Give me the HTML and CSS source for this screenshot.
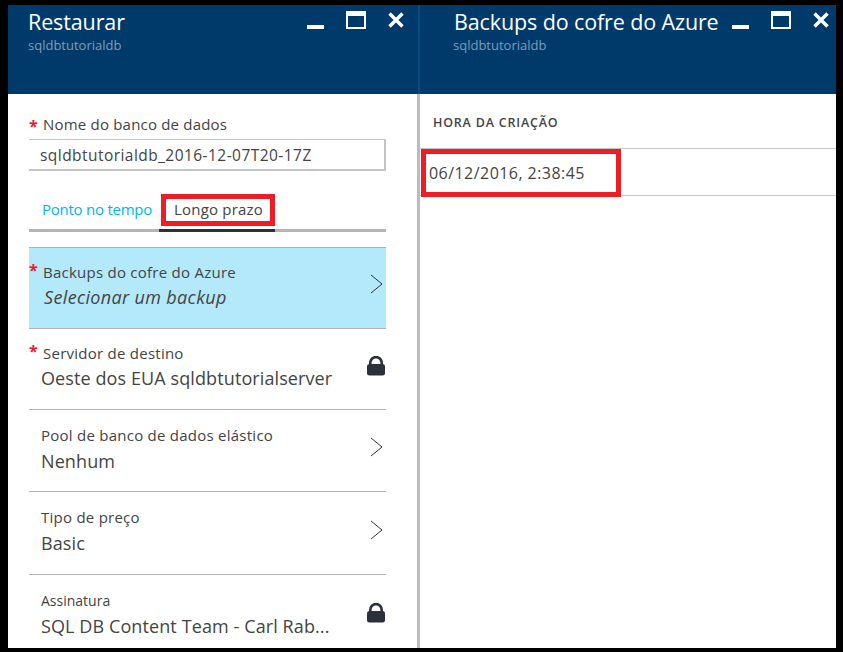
FILE: index.html
```html
<!DOCTYPE html>
<html lang="en">
<head>
    <meta charset="UTF-8">
    <meta name="viewport" content="width=device-width, initial-scale=1.0">
    <title>Restaurar</title>
    <link rel="stylesheet" href="styles.css">
</head>
<body>
    <svg class="icon-defs" width="0" height="0">
        <symbol id="minimize" viewBox="0 0 17 4"><rect x="0" y="0" width="17" height="4" fill="#fff"/></symbol>
        <symbol id="maximize" viewBox="0 0 20 18"><path d="M0 0H20V18H0ZM2 5V16H18V5Z" fill="#fff" fill-rule="evenodd"/></symbol>
        <symbol id="close" viewBox="0 0 16 16"><path d="M1.5 1.5L14.5 14.5M14.5 1.5L1.5 14.5" stroke="#fff" stroke-width="3.4" fill="none"/></symbol>
        <symbol id="chevron" viewBox="0 0 13 20"><path d="M1 1L12 10L1 19" stroke="#30353f" stroke-width="1" fill="none"/></symbol>
        <symbol id="lock" viewBox="0 0 18 20"><path d="M3.3 9V6.8a5.7 5.7 0 0 1 11.4 0V9" stroke="#2b303b" stroke-width="2.6" fill="none"/><rect x="0" y="8" width="18" height="11.5" rx="2.5" fill="#2b303b"/></symbol>
    </svg>

    <div class="portal">
        <section class="blade blade-left">
            <header class="blade-header">
                <div class="blade-titles">
                    <h1>Restaurar</h1>
                    <p>sqldbtutorialdb</p>
                </div>
                <div class="blade-actions">
                    <svg class="ic-min"><use href="#minimize"/></svg>
                    <svg class="ic-max"><use href="#maximize"/></svg>
                    <svg class="ic-close"><use href="#close"/></svg>
                </div>
            </header>
            <div class="blade-body">
                <label class="field-label" for="dbName"><span class="req">*</span>Nome do banco de dados</label>
                <input class="field-input" id="dbName" type="text" value="sqldbtutorialdb_2016-12-07T20-17Z">

                <div class="tabs">
                    <a class="tab">Ponto no tempo</a>
                    <a class="tab tab-active"><span class="mark-tab">Longo prazo</span></a>
                </div>

                <div class="row row-selected">
                    <div class="row-text">
                        <span class="row-label row-label-req"><span class="req req-row">*</span>Backups do cofre do Azure</span>
                        <span class="row-value row-value-em">Selecionar um backup</span>
                    </div>
                    <svg class="ic-chevron"><use href="#chevron"/></svg>
                </div>
                <div class="row row-short">
                    <div class="row-text">
                        <span class="row-label row-label-req"><span class="req req-row">*</span>Servidor de destino</span>
                        <span class="row-value">Oeste dos EUA sqldbtutorialserver</span>
                    </div>
                    <svg class="ic-lock"><use href="#lock"/></svg>
                </div>
                <div class="row">
                    <div class="row-text row-text-plain">
                        <span class="row-label">Pool de banco de dados elástico</span>
                        <span class="row-value">Nenhum</span>
                    </div>
                    <svg class="ic-chevron"><use href="#chevron"/></svg>
                </div>
                <div class="row row-tall">
                    <div class="row-text row-text-plain">
                        <span class="row-label">Tipo de preço</span>
                        <span class="row-value">Basic</span>
                    </div>
                    <svg class="ic-chevron"><use href="#chevron"/></svg>
                </div>
                <div class="row">
                    <div class="row-text row-text-last">
                        <span class="row-label row-label-small">Assinatura</span>
                        <span class="row-value">SQL DB Content Team - Carl Rab...</span>
                    </div>
                    <svg class="ic-lock"><use href="#lock"/></svg>
                </div>
            </div>
        </section>

        <section class="blade blade-right">
            <header class="blade-header">
                <div class="blade-titles">
                    <h1>Backups do cofre do Azure</h1>
                    <p>sqldbtutorialdb</p>
                </div>
                <div class="blade-actions">
                    <svg class="ic-min"><use href="#minimize"/></svg>
                    <svg class="ic-max"><use href="#maximize"/></svg>
                    <svg class="ic-close"><use href="#close"/></svg>
                </div>
            </header>
            <div class="blade-body-right">
                <div class="grid-head">HORA DA CRIAÇÃO</div>
                <div class="grid-row">
                    <span class="mark-cell">06/12/2016, 2:38:45</span>
                </div>
            </div>
        </section>
    </div>
</body>
</html>
```

FILE: styles.css
```css
html, body {
    margin: 0;
    padding: 0;
    height: 100%;
    background-color: #000000;
    overflow: hidden;
}
body {
    font-family: "Open Sans", "Noto Sans", Arial, sans-serif;
    color: #444444;
}
.icon-defs {
    position: absolute;
}
.portal {
    display: flex;
    width: 828px;
    height: 643px;
    margin: 5px 0 0 8px;
    background-color: #ffffff;
}
.blade {
    display: flex;
    flex-direction: column;
    min-width: 0;
}
.blade-left {
    width: 409px;
    flex: none;
    border-right: 3px solid #bcbcbc;
}
.blade-right {
    flex: 1;
}
.blade-header {
    position: relative;
    height: 89px;
    flex: none;
    background-color: #003a6a;
    color: #ffffff;
}
.blade-left .blade-header {
    margin-right: -3px;
    box-shadow: inset -2px 0 0 #0b4a7d, inset -3px 0 0 #003a6a;
}
.blade-titles {
    padding: 2px 0 0 20px;
}
.blade-right .blade-titles {
    padding-left: 34px;
}
.blade-right .blade-titles p {
    margin-left: -1px;
}
.blade-titles h1 {
    margin: 0;
    font-size: 21.5px;
    font-weight: 400;
    line-height: 29px;
    white-space: nowrap;
    letter-spacing: -0.12px;
}
.blade-titles p {
    margin: 0;
    font-size: 13px;
    line-height: 18px;
    color: #7f9db8;
}
.blade-actions svg {
    position: absolute;
    display: block;
}
.ic-min {
    width: 17px;
    height: 4px;
    top: 20px;
    left: 299px;
}
.ic-max {
    width: 20px;
    height: 18px;
    top: 6px;
    left: 338px;
}
.ic-close {
    width: 16px;
    height: 16px;
    top: 7px;
    left: 380px;
}
.blade-right .ic-min {
    left: 312px;
}
.blade-right .ic-max {
    left: 351px;
}
.blade-right .ic-close {
    left: 393px;
}
.blade-body {
    flex: 1;
    padding: 20px 31px 0 21px;
    overflow: hidden;
}
.field-label {
    display: block;
    height: 25px;
    font-size: 15px;
    line-height: 20px;
    letter-spacing: 0.2px;
}
.req {
    display: inline-block;
    width: 14px;
    color: #ee1c25;
    font-size: 16px;
    font-weight: 700;
    line-height: 14px;
    vertical-align: -2px;
}
.field-input {
    display: block;
    width: 100%;
    height: 32px;
    box-sizing: border-box;
    margin: 0;
    padding: 0 11px;
    border: solid #c4c4c4;
    border-width: 1px 2px 2px 0;
    font-family: inherit;
    font-size: 15.5px;
    letter-spacing: 0.45px;
    color: #444444;
    outline: none;
}
.tabs {
    display: flex;
    align-items: stretch;
    height: 36px;
    margin-top: 22px;
    margin-bottom: 15px;
    border-bottom: 3px solid #b4b4b4;
}
.tab {
    font-size: 15px;
    line-height: 22px;
    white-space: nowrap;
}
.tabs .tab:first-child {
    padding: 5px 7px 0 13px;
    color: #00b4ef;
    letter-spacing: -0.25px;
}
.tab-active {
    margin-bottom: -3px;
    border-bottom: 3px solid #2b303b;
    padding-left: 2px;
    letter-spacing: 0.2px;
}
.mark-tab {
    display: block;
    box-sizing: border-box;
    height: 32px;
    margin-top: 1px;
    border: 5px solid #ee1c25;
    padding: 0 7px 0 8px;
    line-height: 20px;
}
.row {
    display: flex;
    align-items: center;
    justify-content: space-between;
    height: 82px;
    box-sizing: border-box;
    border-top: 1px solid #b4b4b4;
    padding-right: 3px;
    flex: none;
}
.row-short {
    height: 81px;
}
.row-tall {
    height: 83px;
}
.row-selected {
    height: 81px;
    background-color: #b3e9fb;
    border-top-color: #a8b4ba;
}
.row-text {
    display: flex;
    flex-direction: column;
    gap: 2px;
    padding-left: 12px;
    margin-bottom: 5px;
}
.row-text-plain {
    gap: 3px;
    margin-bottom: 3px;
}
.row-text-last {
    margin-bottom: 1px;
}
.row-label {
    position: relative;
    font-size: 15px;
    line-height: 20px;
    letter-spacing: 0.25px;
}
.row-label-req {
    padding-left: 2px;
}
.row-label-small {
    font-size: 14px;
    letter-spacing: 0;
}
.row-value {
    font-size: 18px;
    line-height: 26px;
    letter-spacing: 0.1px;
    white-space: nowrap;
}
.row-value-em {
    font-style: italic;
    padding-left: 3px;
    letter-spacing: 0.35px;
}
.req-row {
    position: absolute;
    left: -12px;
    top: 1px;
}
.ic-chevron {
    width: 13px;
    height: 20px;
    flex: none;
    margin-bottom: 7px;
}
.row-selected .ic-chevron {
    margin-bottom: 9px;
}
.ic-lock {
    width: 18px;
    height: 20px;
    flex: none;
    margin-right: -2px;
    margin-bottom: 6px;
}
.blade-body-right {
    flex: 1;
}
.grid-head {
    height: 54px;
    box-sizing: border-box;
    padding: 19px 0 0 13px;
    font-size: 12.5px;
    font-weight: 600;
    line-height: 20px;
    letter-spacing: 0.8px;
}
.grid-row {
    height: 48px;
    box-sizing: border-box;
    border-top: 1px solid #c8c8c8;
    border-bottom: 1px solid #c8c8c8;
}
.mark-cell {
    display: block;
    width: 200px;
    height: 48px;
    box-sizing: border-box;
    margin-left: 1px;
    border: 5px solid #ee1c25;
    padding-left: 3px;
    font-size: 16px;
    line-height: 39px;
    letter-spacing: 0.45px;
}
```
